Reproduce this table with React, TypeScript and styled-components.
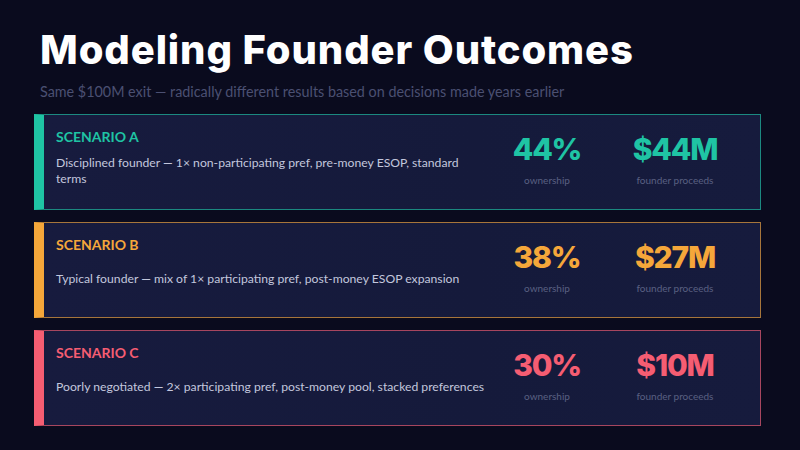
import React from 'react';
import styled, { createGlobalStyle } from 'styled-components';

interface Scenario {
  tag: string;
  text: string;
  ownership: string;
  proceeds: string;
  color: string;
}

const scenarios: Scenario[] = [
  {
    tag: 'SCENARIO A',
    text: 'Disciplined founder — 1× non-participating pref, pre-money ESOP, standard terms',
    ownership: '44%',
    proceeds: '$44M',
    color: '#1fc4a4',
  },
  {
    tag: 'SCENARIO B',
    text: 'Typical founder — mix of 1× participating pref, post-money ESOP expansion',
    ownership: '38%',
    proceeds: '$27M',
    color: '#f5a73a',
  },
  {
    tag: 'SCENARIO C',
    text: 'Poorly negotiated — 2× participating pref, post-money pool, stacked preferences',
    ownership: '30%',
    proceeds: '$10M',
    color: '#f55d72',
  },
];

const App = () => {
  return (
    <Page>
      <GlobalStyle />
      <Title>Modeling Founder Outcomes</Title>
      <Subtitle>Same $100M exit — radically different results based on decisions made years earlier</Subtitle>
      <CardList>
        {scenarios.map((s) => (
          <Card key={s.tag} $color={s.color}>
            <Info>
              <Tag $color={s.color}>{s.tag}</Tag>
              <Description>{s.text}</Description>
            </Info>
            <Metrics>
              <Metric>
                <Value $color={s.color}>{s.ownership}</Value>
                <MetricLabel>ownership</MetricLabel>
              </Metric>
              <Metric>
                <Value $color={s.color}>{s.proceeds}</Value>
                <MetricLabel>founder proceeds</MetricLabel>
              </Metric>
            </Metrics>
          </Card>
        ))}
      </CardList>
    </Page>
  );
};

const GlobalStyle = createGlobalStyle`
  html, body {
    margin: 0;
    padding: 0;
    background: #0a0b1e;
  }
`;

const Page = styled.main`
  width: 800px;
  height: 450px;
  box-sizing: border-box;
  padding: 26px 39px 0 34px;
  background: #0a0b1e;
  font-family: Lato, 'Noto Sans', sans-serif;
  overflow: hidden;
`;

const Title = styled.h1`
  margin: 0 0 0 6px;
  font-family: Inter, 'DejaVu Sans', sans-serif;
  font-weight: 800;
  font-size: 40px;
  line-height: 48px;
  color: #ffffff;
  letter-spacing: 0.9px;
`;

const Subtitle = styled.p`
  margin: 9px 0 0 6px;
  font-size: 14.35px;
  line-height: 18px;
  color: #4b5072;
`;

const CardList = styled.section`
  display: flex;
  flex-direction: column;
  gap: 12px;
  margin-top: 13px;
`;

const Card = styled.div<{ $color: string }>`
  display: flex;
  height: 96px;
  box-sizing: border-box;
  border: 1px solid ${(p) => p.$color}a6;
  border-left: 10px solid ${(p) => p.$color};
  background: linear-gradient(90deg, #171b3e 0%, #151a3b 60%, #161b3d 100%);
`;

const Info = styled.div`
  flex: 1;
  display: flex;
  flex-direction: column;
  padding: 13px 6px 13px 12px;
`;

const Tag = styled.div<{ $color: string }>`
  font-weight: 700;
  font-size: 14px;
  line-height: 17px;
  color: ${(p) => p.$color};
`;

const Description = styled.div`
  flex: 1;
  display: flex;
  align-items: center;
  font-size: 12.2px;
  line-height: 16px;
  color: #c3c7dd;
`;

const Metrics = styled.div`
  display: flex;
  align-items: center;
  gap: 18px;
  padding: 0 30px 6px 0;
`;

const Metric = styled.div`
  width: 110px;
  display: flex;
  flex-direction: column;
  align-items: center;
`;

const Value = styled.div<{ $color: string }>`
  font-family: Inter, 'DejaVu Sans', sans-serif;
  font-weight: 800;
  font-size: 30px;
  line-height: 34px;
  letter-spacing: -1.2px;
  color: ${(p) => p.$color};
`;

const MetricLabel = styled.div`
  margin-top: 8px;
  font-size: 10px;
  line-height: 12px;
  color: #5a6082;
`;

export default App;
